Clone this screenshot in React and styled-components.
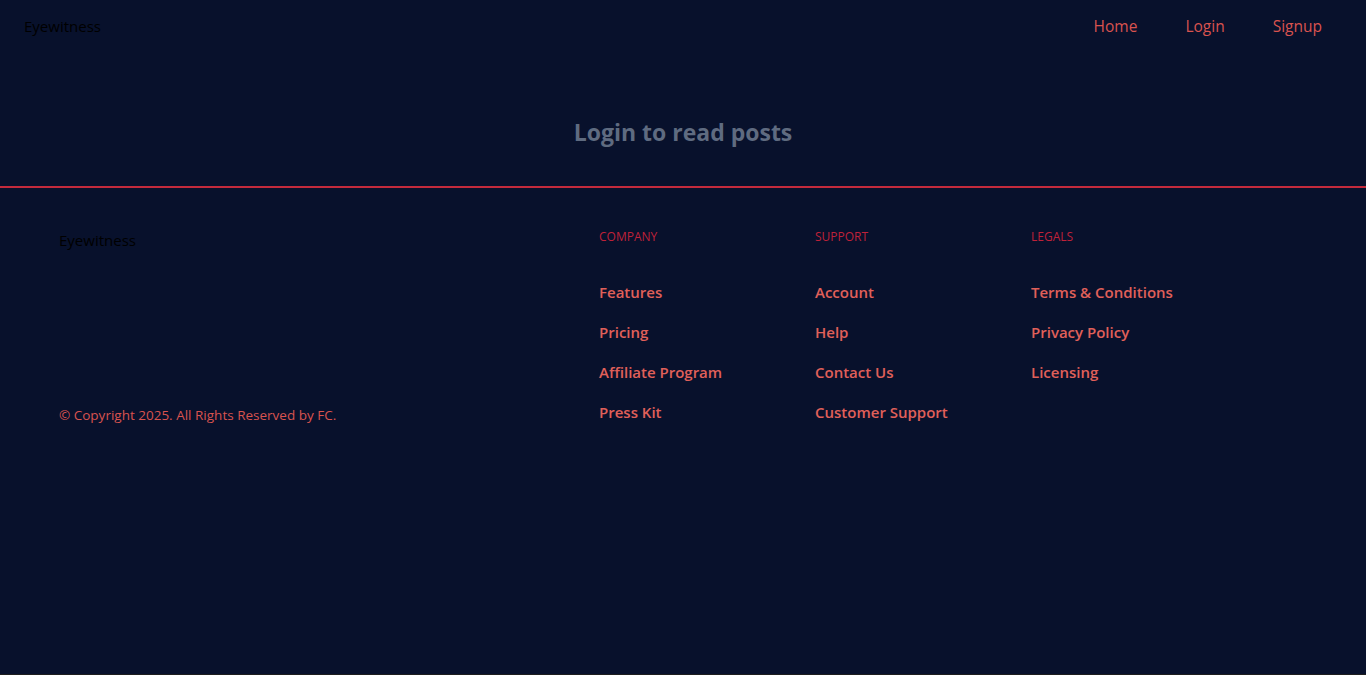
import React from "react";
import styled, { createGlobalStyle } from "styled-components";

const Global = createGlobalStyle`
  html, body { margin: 0; padding: 0; background: #1e1e1e; }
  body { font-family: "Open Sans", "Noto Sans", sans-serif; }
  * { box-sizing: border-box; }
`;

const Page = styled.div`
  background: #08112c;
  min-height: 674px;
`;

const Nav = styled.nav`
  display: flex;
  align-items: center;
  justify-content: space-between;
  height: 52px;
  padding: 0 44px 0 24px;
`;

const Brand = styled.div`
  color: #000;
  font-size: 15px;
`;

const NavLinks = styled.div`
  display: flex;
  gap: 48px;
`;

const NavLink = styled.a`
  color: #d9534f;
  font-size: 15.5px;
  text-decoration: none;
`;

const Main = styled.main`
  display: flex;
  justify-content: center;
  padding: 64px 0 38px;
  border-bottom: 2px solid #c42a3c;
`;

const Heading = styled.h2`
  margin: 0;
  color: #5f6b80;
  font-size: 23px;
  font-weight: 700;
  line-height: 32px;
`;

const Footer = styled.footer`
  max-width: 1248px;
  margin: 0 auto;
  padding: 38px 0 0;
  display: grid;
  grid-template-columns: 540px repeat(3, 216px);
`;

const LeftCol = styled.div`
  display: flex;
  flex-direction: column;
  justify-content: space-between;
`;

const FooterBrand = styled.div`
  color: #000;
  font-size: 15px;
  line-height: 20px;
  padding-top: 4px;
`;

const Copyright = styled.div`
  color: #d9534f;
  font-size: 13.5px;
  line-height: 20px;
  margin-bottom: -3px;
`;

const Col = styled.div`
  display: flex;
  flex-direction: column;
`;

const ColTitle = styled.h3`
  margin: 1px 0 35px;
  color: #bf2139;
  font-size: 12px;
  font-weight: 400;
  text-transform: uppercase;
  line-height: 20px;
`;

const LinkList = styled.ul`
  list-style: none;
  margin: 0;
  padding: 0;
  display: flex;
  flex-direction: column;
  gap: 20px;
`;

const FooterLink = styled.a`
  display: block;
  color: #e0605a;
  font-size: 15px;
  font-weight: 600;
  text-decoration: none;
  line-height: 20px;
`;

const columns = [
  { title: "Company", links: ["Features", "Pricing", "Affiliate Program", "Press Kit"] },
  { title: "Support", links: ["Account", "Help", "Contact Us", "Customer Support"] },
  { title: "Legals", links: ["Terms & Conditions", "Privacy Policy", "Licensing"] },
];

export default function App() {
  return (
    <Page>
      <Global />
      <Nav>
        <Brand>Eyewitness</Brand>
        <NavLinks>
          <NavLink href="#">Home</NavLink>
          <NavLink href="#">Login</NavLink>
          <NavLink href="#">Signup</NavLink>
        </NavLinks>
      </Nav>
      <Main>
        <Heading>Login to read posts</Heading>
      </Main>
      <Footer>
        <LeftCol>
          <FooterBrand>Eyewitness</FooterBrand>
          <Copyright>© Copyright 2025. All Rights Reserved by FC.</Copyright>
        </LeftCol>
        {columns.map((c) => (
          <Col key={c.title}>
            <ColTitle>{c.title}</ColTitle>
            <LinkList>
              {c.links.map((l) => (
                <li key={l}>
                  <FooterLink href="#">{l}</FooterLink>
                </li>
              ))}
            </LinkList>
          </Col>
        ))}
      </Footer>
    </Page>
  );
}
